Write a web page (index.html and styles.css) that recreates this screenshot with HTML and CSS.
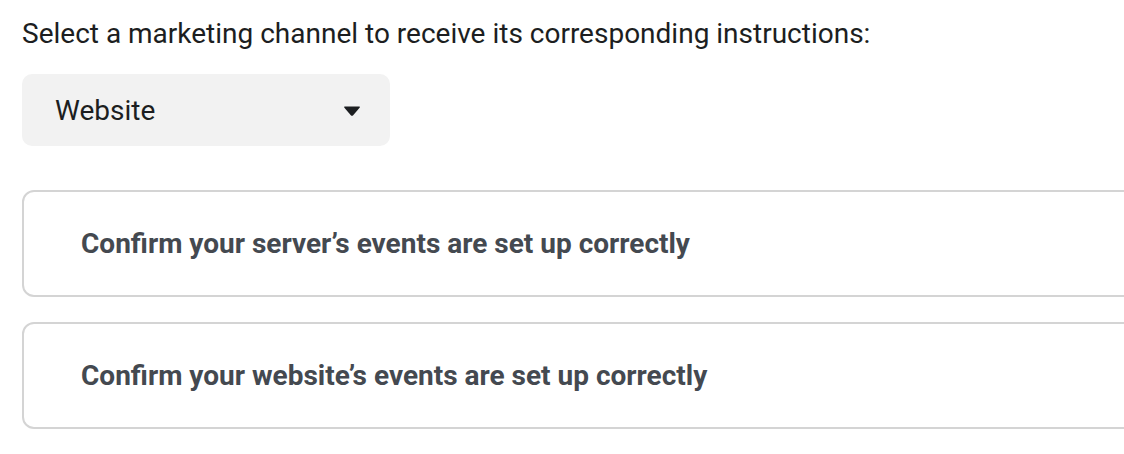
FILE: index.html
```html
<!DOCTYPE html>
<html lang="en">
<head>
    <meta charset="UTF-8">
    <meta name="viewport" content="width=device-width, initial-scale=1.0">
    <title>Marketing Channel Instructions</title>
    <link rel="stylesheet" href="styles.css">
</head>
<body>
    <main class="channel-setup">
        <p class="intro">Select a marketing channel to receive its corresponding instructions:</p>

        <div class="select-box">
            <span class="select-value">Website</span>
            <svg class="select-caret" width="18" height="12" viewBox="0 0 18 12">
                <path d="M2 1.5 H16 Q17.6 1.5 16.6 2.8 L10.2 10.2 Q9 11.5 7.8 10.2 L1.4 2.8 Q0.4 1.5 2 1.5 Z" fill="#1c1e21"/>
            </svg>
        </div>

        <section class="steps">
            <div class="step-card">
                <h2>Confirm your server’s events are set up correctly</h2>
            </div>
            <div class="step-card">
                <h2>Confirm your website’s events are set up correctly</h2>
            </div>
        </section>
    </main>
</body>
</html>
```

FILE: styles.css
```css
html{
    overflow: hidden;
}

body{
    margin: 0;
    font-family: Roboto, "Liberation Sans", sans-serif;
    background-color: white;
    color: #1c1e21;
}

.channel-setup{
    padding: 17px 0 0 22px;
    width: 1140px;
}

.intro{
    margin: 0;
    font-size: 28px;
    line-height: 34px;
}

.select-box{
    margin-top: 23px;
    width: 368px;
    height: 72px;
    box-sizing: border-box;
    padding: 0 29px 0 33px;
    display: flex;
    align-items: center;
    justify-content: space-between;
    background-color: #f2f2f2;
    border-radius: 10px;
}

.select-value{
    font-size: 28px;
}

.select-caret{
    display: block;
    margin-top: 2px;
}

.steps{
    margin-top: 44px;
    display: flex;
    flex-direction: column;
    gap: 25px;
}

.step-card{
    height: 107px;
    box-sizing: border-box;
    border: 2px solid #d4d4d4;
    border-radius: 12px;
    padding: 0 0 0 57px;
    display: flex;
    align-items: center;
}

.step-card h2{
    margin: 0;
    font-size: 28px;
    font-weight: 700;
    color: #444950;
}
```
